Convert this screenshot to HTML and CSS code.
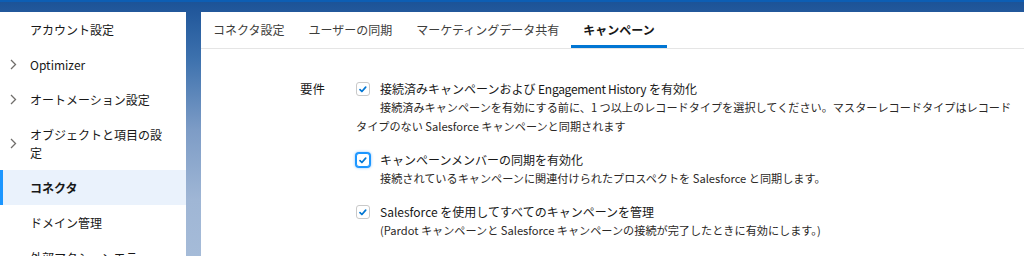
FILE: index.html
```html
<!DOCTYPE html>
<html lang="ja">
<head>
  <meta charset="UTF-8">
  <title>コネクタ</title>
  <link rel="stylesheet" href="styles.css">
</head>
<body>
  <div class="page">
    <aside class="sidebar">
      <ul class="menu">
        <li class="menu-item">アカウント設定</li>
        <li class="menu-item has-sub"><span class="chev"><svg width="7" height="11" viewBox="0 0 7 11"><path d="M1 1l4.5 4.5L1 10" fill="none" stroke="#706e6b" stroke-width="1.3"/></svg></span>Optimizer</li>
        <li class="menu-item has-sub"><span class="chev"><svg width="7" height="11" viewBox="0 0 7 11"><path d="M1 1l4.5 4.5L1 10" fill="none" stroke="#706e6b" stroke-width="1.3"/></svg></span>オートメーション設定</li>
        <li class="menu-item has-sub"><span class="chev"><svg width="7" height="11" viewBox="0 0 7 11"><path d="M1 1l4.5 4.5L1 10" fill="none" stroke="#706e6b" stroke-width="1.3"/></svg></span>オブジェクトと項目の設定</li>
        <li class="menu-item active">コネクタ</li>
        <li class="menu-item">ドメイン管理</li>
        <li class="menu-item">外部アクションエラー</li>
      </ul>
    </aside>

    <main class="panel">
      <nav class="tabs">
        <a class="tab">コネクタ設定</a>
        <a class="tab">ユーザーの同期</a>
        <a class="tab">マーケティングデータ共有</a>
        <a class="tab active">キャンペーン</a>
      </nav>

      <section class="form-row">
        <div class="row-label">要件</div>
        <div class="options">
          <div class="option">
            <div class="option-head">
              <span class="cb"><svg width="12" height="12" viewBox="0 0 12 12"><path d="M3 6.6l1.9 1.9 3.8-4.4" fill="none" stroke="#0176d3" stroke-width="1.7" stroke-linecap="round" stroke-linejoin="round"/></svg></span>
              <span class="option-label">接続済みキャンペーンおよび <span class="latin">Engagement History</span> を有効化</span>
            </div>
            <p class="help">接続済みキャンペーンを有効にする前に、1 つ以上のレコードタイプを選択してください。マスターレコードタイプはレコードタイプのない Salesforce キャンペーンと同期されます</p>
          </div>

          <div class="option">
            <div class="option-head">
              <span class="cb focus"><svg width="12" height="12" viewBox="0 0 12 12"><path d="M3 6.6l1.9 1.9 3.8-4.4" fill="none" stroke="#0176d3" stroke-width="1.7" stroke-linecap="round" stroke-linejoin="round"/></svg></span>
              <span class="option-label">キャンペーンメンバーの同期を有効化</span>
            </div>
            <p class="help">接続されているキャンペーンに関連付けられたプロスペクトを Salesforce と同期します。</p>
          </div>

          <div class="option">
            <div class="option-head">
              <span class="cb"><svg width="12" height="12" viewBox="0 0 12 12"><path d="M3 6.6l1.9 1.9 3.8-4.4" fill="none" stroke="#0176d3" stroke-width="1.7" stroke-linecap="round" stroke-linejoin="round"/></svg></span>
              <span class="option-label">Salesforce を使用してすべてのキャンペーンを管理</span>
            </div>
            <p class="help">(Pardot キャンペーンと Salesforce キャンペーンの接続が完了したときに有効にします。)</p>
          </div>
        </div>
      </section>
    </main>
  </div>
</body>
</html>
```

FILE: styles.css
```css
*, *::before, *::after { box-sizing: border-box; margin: 0; padding: 0; }
html, body { height: 100%; }
body {
  font-family: "Noto Sans CJK JP", "Noto Sans", sans-serif;
  font-size: 12px;
  color: #181818;
  border-top: 2px solid #0d5eb4;
  background: linear-gradient(#1b5297 0, #3e72ae 60px, #7d9cc6 130px, #9fb6d5 200px, #a5bbd8 256px);
  overflow: hidden;
}

.page { display: flex; gap: 15px; padding-top: 10px; height: 100%; }

/* sidebar */
.sidebar { width: 186px; flex-shrink: 0; background: #fff; }
.menu { list-style: none; }
.menu-item { position: relative; padding: 8.5px 16px 8.5px 30px; line-height: 18px; }
.chev { position: absolute; left: 10px; top: 50%; margin-top: -6px; display: flex; }
.menu-item.active { background: #eaf2fc; font-weight: bold; box-shadow: inset 3px 0 0 #1b96ff; }

/* main panel */
.panel { flex: 1; background: #fff; }
.tabs { display: flex; height: 37px; border-bottom: 1px solid #e5e5e5; }
.tab { padding: 0 12px; line-height: 36px; color: #3e3e3c; }
.tab.active { color: #181818; font-weight: bold; box-shadow: inset 0 -3px 0 #0176d3; }

.form-row { display: grid; grid-template-columns: 56px 1fr; padding: 31px 8px 0 99px; }
.row-label { line-height: 18px; font-size: 12.5px; }

.options { display: flex; flex-direction: column; gap: 15px; }
.option-head { display: flex; align-items: center; gap: 10px; line-height: 18px; }
.latin { letter-spacing: -0.3px; }
.cb { width: 14px; height: 14px; border: 1px solid #c9c9c9; border-radius: 3px; display: flex; align-items: center; justify-content: center; background: #fff; }
.cb.focus { border-color: #1b96ff; box-shadow: 0 0 0 1px #1b96ff, 0 0 3px 1px #8ec5ff; }
.help { font-size: 11.15px; line-height: 19px; text-indent: 24px; color: #2b2826; }
```
